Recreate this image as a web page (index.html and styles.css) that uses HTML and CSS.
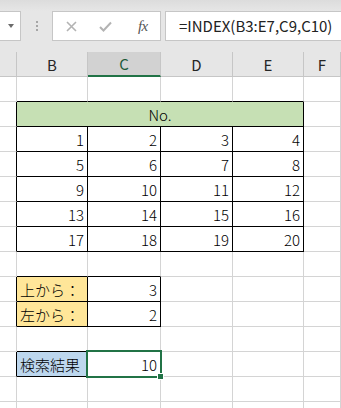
FILE: index.html
```html
<!DOCTYPE html>
<html lang="ja">
<head>
<meta charset="utf-8">
<link rel="stylesheet" href="styles.css">
</head>
<body>
<div class="ribbon-edge"></div>
<div class="fbar">
  <div class="namebox"><span class="tri"></span></div>
  <div class="grip"><i></i><i></i><i></i></div>
  <div class="buttons">
    <span class="btn">
      <svg width="11" height="11" viewBox="0 0 11 11"><path d="M1 1L10 10M10 1L1 10" stroke="#b3b3b3" stroke-width="1.6" fill="none"/></svg>
    </span>
    <span class="btn">
      <svg width="13" height="11" viewBox="0 0 13 11"><path d="M1 6L4.5 9.5L12 1.5" stroke="#b3b3b3" stroke-width="2" fill="none"/></svg>
    </span>
    <span class="btn fx">fx</span>
  </div>
  <div class="formula">=INDEX(B3:E7,C9,C10)</div>
</div>
<table class="sheet">
  <colgroup>
    <col class="w-a"><col class="w-b"><col class="w-c"><col class="w-d"><col class="w-e"><col class="w-f">
  </colgroup>
  <thead>
    <tr><th></th><th>B</th><th class="sel">C</th><th>D</th><th>E</th><th>F</th></tr>
  </thead>
  <tbody>
    <tr><td></td><td class="bb"></td><td class="bb"></td><td class="bb"></td><td class="bb"></td><td></td></tr>
    <tr><td class="br"></td><td colspan="4" class="box hdr">No.</td><td></td></tr>
    <tr><td class="br"></td><td class="box">1</td><td class="box">2</td><td class="box">3</td><td class="box">4</td><td></td></tr>
    <tr><td class="br"></td><td class="box">5</td><td class="box">6</td><td class="box">7</td><td class="box">8</td><td></td></tr>
    <tr><td class="br"></td><td class="box">9</td><td class="box">10</td><td class="box">11</td><td class="box">12</td><td></td></tr>
    <tr><td class="br"></td><td class="box">13</td><td class="box">14</td><td class="box">15</td><td class="box">16</td><td></td></tr>
    <tr><td class="br"></td><td class="box">17</td><td class="box">18</td><td class="box">19</td><td class="box">20</td><td></td></tr>
    <tr><td></td><td class="bb"></td><td class="bb"></td><td></td><td></td><td></td></tr>
    <tr><td class="br"></td><td class="box lbl orange">上から：</td><td class="box">3</td><td></td><td></td><td></td></tr>
    <tr><td class="br"></td><td class="box lbl orange">左から：</td><td class="box">2</td><td></td><td></td><td></td></tr>
    <tr><td></td><td class="bb"></td><td class="bb"></td><td></td><td></td><td></td></tr>
    <tr><td class="br"></td><td class="box lbl blue">検索結果</td><td class="box active">10<span class="selbox"><span class="handle"></span></span></td><td></td><td></td><td></td></tr>
    <tr><td></td><td></td><td></td><td></td><td></td><td></td></tr>
    <tr><td></td><td></td><td></td><td></td><td></td><td></td></tr>
  </tbody>
</table>
</body>
</html>
```
FILE: styles.css
```css
html, body {
  margin: 0;
  padding: 0;
}
body {
  width: 341px;
  height: 408px;
  overflow: hidden;
  background: #e6e6e6;
  font-family: "Noto Sans CJK JP", "Noto Sans", sans-serif;
  color: #000;
}
.ribbon-edge {
  height: 11px;
  background: linear-gradient(#dcdcdc, #e6e6e6);
}
.fbar {
  display: flex;
  height: 30px;
  margin-bottom: 11px;
}
.namebox {
  width: 21px;
  box-sizing: border-box;
  background: #fff;
  border: 1px solid #c6c6c6;
  border-left: none;
  display: flex;
  align-items: center;
}
.tri {
  margin-left: 8px;
  width: 0;
  height: 0;
  border-left: 3.5px solid transparent;
  border-right: 3.5px solid transparent;
  border-top: 4px solid #6b6b6b;
}
.grip {
  width: 31px;
  display: flex;
  flex-direction: column;
  align-items: center;
  justify-content: center;
  gap: 2px;
}
.grip i {
  display: block;
  width: 2px;
  height: 2px;
  background: #a6a6a6;
}
.buttons {
  width: 109px;
  box-sizing: border-box;
  background: #fff;
  border: 1px solid #c6c6c6;
  display: flex;
  align-items: center;
  padding-left: 1px;
}
.btn {
  width: 36px;
  display: flex;
  align-items: center;
  justify-content: center;
}
.fx {
  font-family: "Liberation Serif", serif;
  font-style: italic;
  font-size: 15px;
  color: #555;
  letter-spacing: -0.5px;
  padding-left: 3px;
}
.formula {
  flex: 1;
  min-width: 0;
  margin-left: 4px;
  box-sizing: border-box;
  background: #fff;
  border: 1px solid #c6c6c6;
  border-right: none;
  padding-left: 13px;
  font-size: 15px;
  line-height: 28px;
  color: #222;
  white-space: nowrap;
  overflow: hidden;
}
.sheet {
  border-collapse: separate;
  border-spacing: 0;
  table-layout: fixed;
  width: 341px;
  background: #fff;
}
.w-a { width: 17px; }
.w-b { width: 71px; }
.w-c { width: 73px; }
.w-d { width: 72px; }
.w-e { width: 71px; }
.w-f { width: 37px; }
.sheet tr {
  height: 25px;
}
.sheet th {
  background: #e6e6e6;
  border-right: 1px solid #c6c6c6;
  border-bottom: 1px solid #c6c6c6;
  padding: 0;
  font-weight: normal;
  font-size: 15px;
  line-height: 1;
  color: #262626;
  text-align: center;
  vertical-align: middle;
  white-space: nowrap;
  overflow: hidden;
}
.sheet th.sel {
  background: #d2d2d2;
  border-bottom: 2px solid #217346;
  color: #1e5a3a;
}
.sheet td {
  border-right: 1px solid #d4d4d4;
  border-bottom: 1px solid #d4d4d4;
  padding: 0 3px 0 0;
  font-size: 15px;
  font-weight: 300;
  line-height: 1;
  text-align: right;
  vertical-align: middle;
  white-space: nowrap;
  overflow: visible;
}
.sheet td.br {
  border-right-color: #000;
}
.sheet td.bb {
  border-bottom-color: #000;
}
.sheet td.box {
  border-right-color: #000;
  border-bottom-color: #000;
}
.sheet td.hdr {
  background: #c6e0b4;
  text-align: center;
  padding: 0;
}
.sheet td.lbl {
  text-align: left;
  padding: 0 0 0 3px;
}
.orange { background: #ffe699; }
.blue { background: #bdd7ee; }
.sheet td.active {
  position: relative;
}
.selbox {
  position: absolute;
  top: -2px;
  left: -2px;
  right: -2px;
  bottom: -2px;
  border: 2px solid #217346;
}
.handle {
  position: absolute;
  right: -4px;
  bottom: -4px;
  width: 5px;
  height: 5px;
  background: #217346;
  border: 1px solid #fff;
}
```
